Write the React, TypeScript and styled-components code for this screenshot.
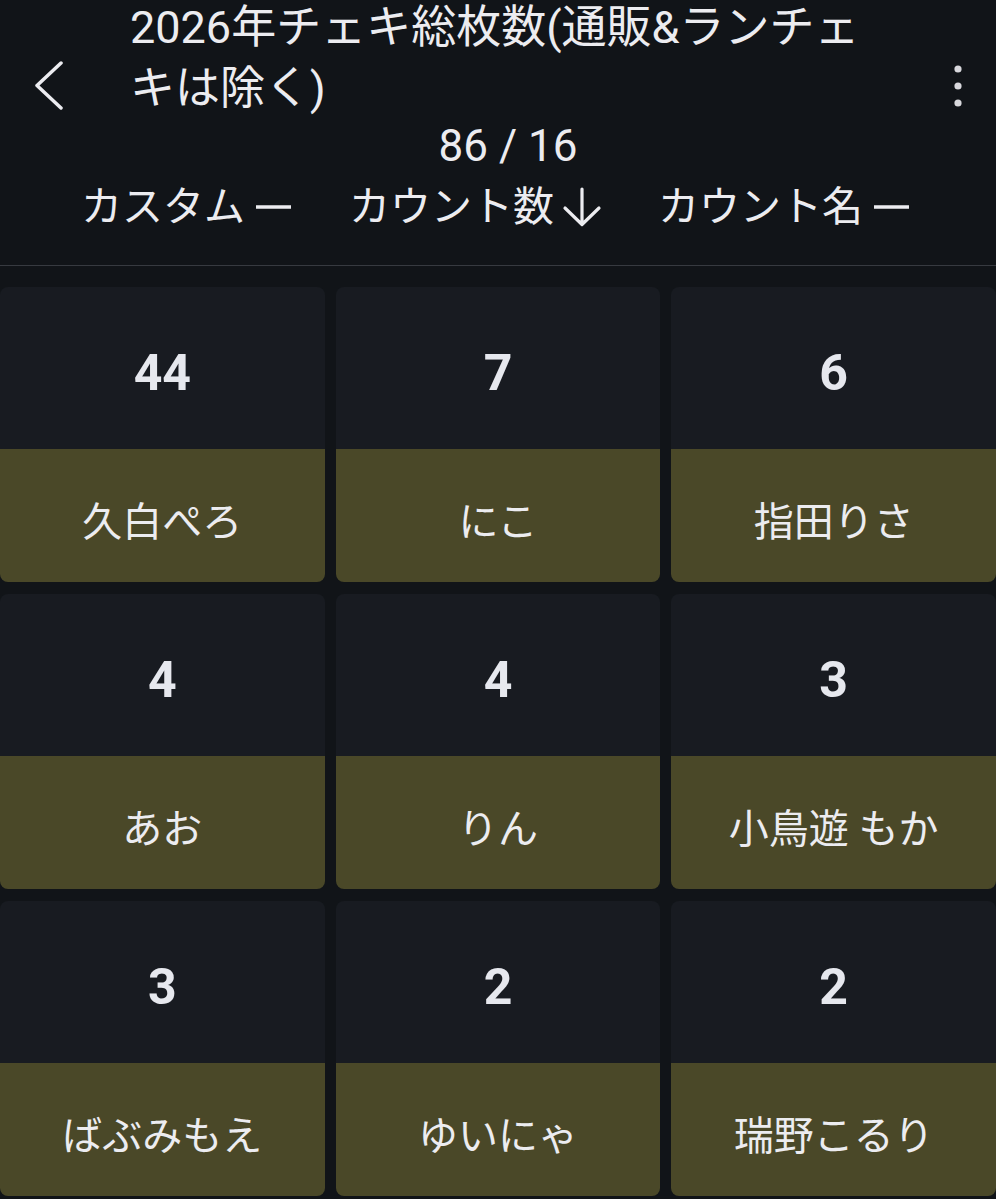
import React from "react";
import styled, { createGlobalStyle } from "styled-components";

const GlobalStyle = createGlobalStyle`
  html, body {
    margin: 0;
    padding: 0;
    background: #111418;
  }
  body {
    font-family: Roboto, "Noto Sans CJK JP", sans-serif;
    color: #e8e8ec;
    overflow: hidden;
  }
`;

const Page = styled.div`
  width: 996px;
  min-height: 1199px;
  background: #111418;
  display: flex;
  flex-direction: column;
`;

const Header = styled.header`
  display: flex;
  flex-direction: column;
  border-bottom: 1px solid #373a40;
  padding-bottom: 33px;
`;

const TopBar = styled.div`
  display: flex;
  align-items: flex-end;
`;

const IconButton = styled.button<{ $width: number }>`
  width: ${(p) => p.$width}px;
  height: 61px;
  margin-bottom: 3px;
  flex: none;
  display: flex;
  align-items: center;
  justify-content: center;
  background: none;
  border: none;
  padding: 0;
  color: #e8e8ec;
`;

const BackButton = styled(IconButton)`
  justify-content: flex-start;
  padding-left: 33px;
  box-sizing: border-box;
`;

const Title = styled.h1`
  flex: 1;
  margin: -3px 0 0 0;
  padding-right: 30px;
  font-size: 45px;
  font-weight: 400;
  line-height: 61px;
  color: #ececf0;
`;

const Count = styled.div`
  text-align: center;
  padding-left: 20px;
  margin-top: 2px;
  font-size: 44px;
  line-height: 50px;
  color: #ececf0;
`;

const SortRow = styled.div`
  display: flex;
  justify-content: center;
  gap: 56px;
  margin-top: 11px;
  padding-right: 4px;
`;

const SortButton = styled.button`
  display: flex;
  align-items: center;
  background: none;
  border: none;
  padding: 0;
  font-family: Roboto, "Noto Sans CJK JP", sans-serif;
  font-size: 41px;
  line-height: 50px;
  color: #ececf0;
`;

const SortIcon = styled.svg`
  width: 40px;
  height: 40px;
  margin-left: 8px;
  flex: none;
`;

const Grid = styled.div`
  display: grid;
  grid-template-columns: repeat(3, 1fr);
  column-gap: 11px;
  row-gap: 12px;
  margin-top: 21px;
`;

const Card = styled.div`
  height: 295px;
  border-radius: 8px;
  overflow: hidden;
  display: grid;
  grid-template-rows: 162px 133px;
`;

const CountArea = styled.div`
  background: #181b21;
  display: flex;
  align-items: center;
  justify-content: center;
  padding-top: 9px;
  box-sizing: border-box;
  font-family: Roboto, "Liberation Sans", sans-serif;
  font-weight: 700;
  font-size: 50px;
  color: #e6e8ee;
`;

const NameArea = styled.div`
  background: #4a4828;
  display: flex;
  align-items: center;
  justify-content: center;
  padding-top: 7px;
  box-sizing: border-box;
  font-size: 40px;
  color: #ececf0;
`;

const items: { count: number; name: string }[] = [
  { count: 44, name: "久白ぺろ" },
  { count: 7, name: "にこ" },
  { count: 6, name: "指田りさ" },
  { count: 4, name: "あお" },
  { count: 4, name: "りん" },
  { count: 3, name: "小鳥遊 もか" },
  { count: 3, name: "ばぶみもえ" },
  { count: 2, name: "ゆいにゃ" },
  { count: 2, name: "瑞野こるり" },
];

const DashIcon = () => (
  <SortIcon viewBox="0 0 40 40">
    <line x1="3" y1="20" x2="38" y2="20" stroke="#ececf0" strokeWidth="3.5" />
  </SortIcon>
);

const ArrowDownIcon = () => (
  <SortIcon viewBox="0 0 40 40">
    <path
      d="M20 2 V37 M3 21 L20 37.5 L37 21"
      fill="none"
      stroke="#ececf0"
      strokeWidth="3.2"
      strokeLinecap="round"
      strokeLinejoin="round"
    />
  </SortIcon>
);

export default function App() {
  return (
    <Page>
      <GlobalStyle />
      <Header>
        <TopBar>
          <BackButton $width={130}>
            <svg width="32" height="50" viewBox="0 0 32 50">
              <path
                d="M28 2 L4 24.5 L28 47"
                fill="none"
                stroke="#ececf0"
                strokeWidth="3.5"
                strokeLinecap="round"
                strokeLinejoin="round"
              />
            </svg>
          </BackButton>
          <Title>2026年チェキ総枚数(通販&amp;ランチェキは除く)</Title>
          <IconButton $width={76}>
            <svg width="10" height="44" viewBox="0 0 10 44">
              <circle cx="5" cy="5" r="3.6" fill="#d8d8dc" />
              <circle cx="5" cy="22" r="3.6" fill="#d8d8dc" />
              <circle cx="5" cy="39" r="3.6" fill="#d8d8dc" />
            </svg>
          </IconButton>
        </TopBar>
        <Count>86 / 16</Count>
        <SortRow>
          <SortButton>
            カスタム
            <DashIcon />
          </SortButton>
          <SortButton>
            カウント数
            <ArrowDownIcon />
          </SortButton>
          <SortButton>
            カウント名
            <DashIcon />
          </SortButton>
        </SortRow>
      </Header>
      <Grid>
        {items.map((it, i) => (
          <Card key={i}>
            <CountArea>{it.count}</CountArea>
            <NameArea>{it.name}</NameArea>
          </Card>
        ))}
      </Grid>
    </Page>
  );
}
